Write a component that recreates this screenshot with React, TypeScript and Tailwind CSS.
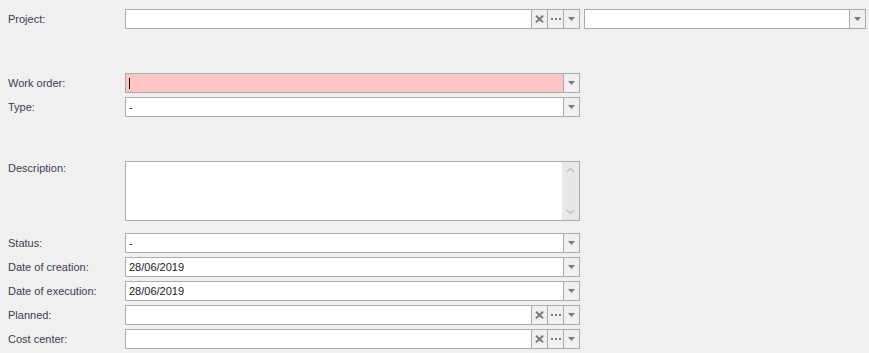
import React from 'react';

const font = { fontFamily: '"Segoe UI", "Liberation Sans", Arial, sans-serif' };

function Arrow() {
    return (
        <div className="w-4 h-full flex items-center justify-center border-l border-[#ababab] bg-[#f0f0f0]">
            <svg width="7" height="4" viewBox="0 0 7 4">
                <path d="M0 0H7L3.5 4Z" fill="#7a7a7a" />
            </svg>
        </div>
    );
}

function ClearBtn() {
    return (
        <div className="w-4 h-full flex items-center justify-center border-l border-[#ababab] bg-[#f0f0f0]">
            <svg width="9" height="8" viewBox="0 0 9 8">
                <path d="M1 0.8L8 7.2M8 0.8L1 7.2" stroke="#7a7a7a" strokeWidth="2" />
            </svg>
        </div>
    );
}

function DotsBtn() {
    return (
        <div className="w-4 h-full flex items-center justify-center gap-[2px] border-l border-[#ababab] bg-[#f0f0f0]">
            <span className="w-[2px] h-[2px] bg-[#7a7a7a]" />
            <span className="w-[2px] h-[2px] bg-[#7a7a7a]" />
            <span className="w-[2px] h-[2px] bg-[#7a7a7a]" />
        </div>
    );
}

function Field({ value, lookup, error, caret, className = 'w-[455px]' }: { value?: string; lookup?: boolean; error?: boolean; caret?: boolean; className?: string }) {
    return (
        <div className={`${className} h-5 flex border border-[#ababab] ${error ? 'bg-[#ffc4c4]' : 'bg-white'}`}>
            <div className="flex-1 flex items-center pl-[3px] text-[11px] text-[#202020]">
                {caret && <span className="w-px h-[11px] bg-black" />}
                {value}
            </div>
            {lookup && <ClearBtn />}
            {lookup && <DotsBtn />}
            <Arrow />
        </div>
    );
}

function Row({ label, children, className = '' }: { label: string; children: React.ReactNode; className?: string }) {
    return (
        <div className={`flex items-center ${className}`}>
            <div className="w-[125px] pl-2 text-[11px] text-[#3c3c50]">{label}</div>
            {children}
        </div>
    );
}

export default function App() {
    return (
        <div className="w-[869px] h-[353px] bg-[#f0f0f0] pt-[9px] overflow-hidden" style={font}>
            <Row label="Project:">
                <Field lookup />
                <Field className="w-[282px] ml-1" />
            </Row>

            <Row label="Work order:" className="mt-[44px]">
                <Field error caret />
            </Row>
            <Row label="Type:" className="mt-1">
                <Field value="-" />
            </Row>

            <div className="flex items-start mt-[44px]">
                <div className="w-[125px] pl-2 pt-[2px] leading-none text-[11px] text-[#3c3c50]">Description:</div>
                <div className="w-[455px] h-[60px] flex border border-[#ababab] bg-white">
                    <div className="flex-1" />
                    <div className="w-[17px] bg-[#e8e8e8] flex flex-col items-center justify-between py-[5px]">
                        <svg width="9" height="6" viewBox="0 0 9 6">
                            <path d="M1 5L4.5 1.5L8 5" stroke="#c4c4c4" strokeWidth="1.6" fill="none" />
                        </svg>
                        <svg width="9" height="6" viewBox="0 0 9 6">
                            <path d="M1 1L4.5 4.5L8 1" stroke="#c4c4c4" strokeWidth="1.6" fill="none" />
                        </svg>
                    </div>
                </div>
            </div>

            <Row label="Status:" className="mt-3">
                <Field value="-" />
            </Row>
            <Row label="Date of creation:" className="mt-1">
                <Field value="28/06/2019" />
            </Row>
            <Row label="Date of execution:" className="mt-1">
                <Field value="28/06/2019" />
            </Row>
            <Row label="Planned:" className="mt-1">
                <Field lookup />
            </Row>
            <Row label="Cost center:" className="mt-1">
                <Field lookup />
            </Row>
        </div>
    );
}
